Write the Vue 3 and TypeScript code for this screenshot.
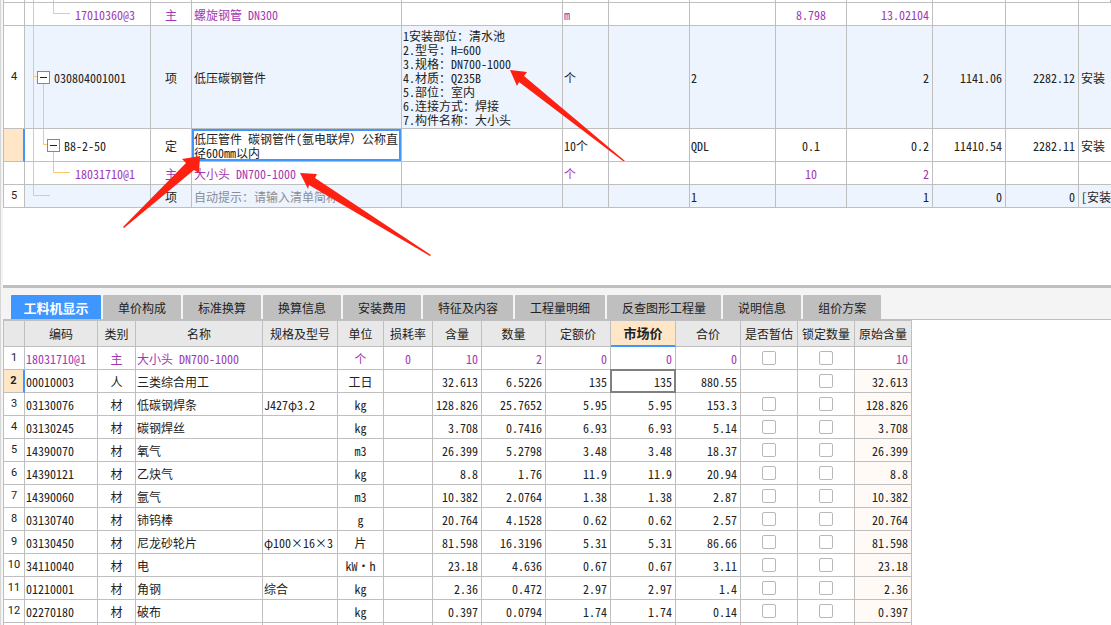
<script setup lang="ts">
import { ref } from 'vue'

type Kind = 'item' | 'quota' | 'material' | 'hint'

interface BillRow {
  no: string
  kind: Kind
  level: number
  code: string
  type: string
  name: string
  features: string
  unit: string
  expression: string
  content: string
  quantity: string
  price: string
  total: string
  major: string
  height: string
  branches: string[]
}

const bill: BillRow[] = [
  { no: '', kind: 'material', level: 3, code: '17010360@3', type: '主', name: '螺旋钢管 DN300', features: '', unit: 'm', expression: '', content: '8.798', quantity: '13.02104', price: '', total: '', major: '', height: 'h23', branches: ['M8.5 0V300', 'M28.5 0V10.5H45'] },
  { no: '4', kind: 'item', level: 1, code: '030804001001', type: '项', name: '低压碳钢管件', features: '1安装部位：清水池\n2.型号：H=600\n3.规格：DN700-1000\n4.材质：Q235B\n5.部位：室内\n6.连接方式：焊接\n7.构件名称：大小头', unit: '个', expression: '2', content: '', quantity: '2', price: '1141.06', total: '2282.12', major: '安装', height: 'h103', branches: ['M8.5 0V300', 'M8.5 50.5H13', 'M18.5 57V300'] },
  { no: '', kind: 'quota', level: 2, code: 'B8-2-50', type: '定', name: '低压管件 碳钢管件(氩电联焊）公称直径600mm以内', features: '', unit: '10个', expression: 'QDL', content: '0.1', quantity: '0.2', price: '11410.54', total: '2282.11', major: '安装', height: 'h33', branches: ['M8.5 0V300', 'M18.5 0V15.5H23', 'M28.5 22V300'] },
  { no: '', kind: 'material', level: 3, code: '18031710@1', type: '主', name: '大小头 DN700-1000', features: '', unit: '个', expression: '', content: '10', quantity: '2', price: '', total: '', major: '', height: 'h23', branches: ['M8.5 0V300', 'M28.5 0V10.5H45'] },
  { no: '5', kind: 'hint', level: 3, code: '', type: '项', name: '自动提示：请输入清单简称', features: '', unit: '', expression: '1', content: '', quantity: '1', price: '0', total: '0', major: '[安装', height: 'h23', branches: ['M8.5 0V10.5H25'] },
]

function pieces(text: string): string[] {
  return text.split(/([（）])/).filter(Boolean)
}

const tabs = ['工料机显示', '单价构成', '标准换算', '换算信息', '安装费用', '特征及内容', '工程量明细', '反查图形工程量', '说明信息', '组价方案']
const activeTab = ref(0)

const headers = ['', '编码', '类别', '名称', '规格及型号', '单位', '损耗率', '含量', '数量', '定额价', '市场价', '合价', '是否暂估', '锁定数量', '原始含量']

interface Resource {
  code: string
  type: string
  name: string
  spec: string
  unit: string
  loss: string
  content: string
  quantity: string
  quotaPrice: string
  marketPrice: string
  total: string
  provisional: boolean | null
  locked: boolean
  original: string
}

function resource(code: string, type: string, name: string, spec: string, unit: string, loss: string, content: string, quantity: string, price: string, total: string, provisional: boolean | null = false): Resource {
  return { code, type, name, spec, unit, loss, content, quantity, quotaPrice: price, marketPrice: price, total, provisional, locked: false, original: content }
}

const resources = ref<Resource[]>([
  resource('18031710@1', '主', '大小头 DN700-1000', '', '个', '0', '10', '2', '0', '0'),
  resource('00010003', '人', '三类综合用工', '', '工日', '', '32.613', '6.5226', '135', '880.55', null),
  resource('03130076', '材', '低碳钢焊条', 'J427φ3.2', 'kg', '', '128.826', '25.7652', '5.95', '153.3'),
  resource('03130245', '材', '碳钢焊丝', '', 'kg', '', '3.708', '0.7416', '6.93', '5.14'),
  resource('14390070', '材', '氧气', '', 'm3', '', '26.399', '5.2798', '3.48', '18.37'),
  resource('14390121', '材', '乙炔气', '', 'kg', '', '8.8', '1.76', '11.9', '20.94'),
  resource('14390060', '材', '氩气', '', 'm3', '', '10.382', '2.0764', '1.38', '2.87'),
  resource('03130740', '材', '铈钨棒', '', 'g', '', '20.764', '4.1528', '0.62', '2.57'),
  resource('03130450', '材', '尼龙砂轮片', 'φ100×16×3', '片', '', '81.598', '16.3196', '5.31', '86.66'),
  resource('34110040', '材', '电', '', 'kW·h', '', '23.18', '4.636', '0.67', '3.11'),
  resource('01210001', '材', '角钢', '综合', 'kg', '', '2.36', '0.472', '2.97', '1.4'),
  resource('02270180', '材', '破布', '', 'kg', '', '0.397', '0.0794', '1.74', '0.14'),
])
const selected = ref(1)
</script>

<template>
  <main class="workspace">
    <section class="bill-pane">
      <table class="grid bill">
        <colgroup>
          <col v-for="n in 13" :key="n" :class="'b' + n" />
        </colgroup>
        <tbody>
          <tr class="sliver">
            <td></td>
            <td><svg class="branches"><path d="M8.5 0V3M28.5 0V3" /></svg></td>
            <td v-for="n in 11" :key="n"></td>
          </tr>
          <tr v-for="(row, i) in bill" :key="i" :class="[row.kind, row.height]">
            <td class="no" :class="{ current: row.kind === 'quota' }">{{ row.no }}</td>
            <td class="code">
              <svg class="branches"><path v-for="d in row.branches" :key="d" :d="d" /></svg>
              <div class="node" :class="'level' + row.level">
                <button v-if="row.level < 3" class="toggle" type="button" aria-label="折叠"></button>
                <span>{{ row.code }}</span>
              </div>
            </td>
            <td class="center">{{ row.type }}</td>
            <td class="name"><span v-for="(p, k) in pieces(row.name)" :key="k" :class="{ wide: p === '）' }">{{ p }}</span></td>
            <td class="features">{{ row.features }}</td>
            <td>{{ row.unit }}</td>
            <td></td>
            <td>{{ row.expression }}</td>
            <td class="center">{{ row.content }}</td>
            <td class="num">{{ row.quantity }}</td>
            <td class="num">{{ row.price }}</td>
            <td class="num">{{ row.total }}</td>
            <td class="major">{{ row.major }}</td>
          </tr>
        </tbody>
      </table>
    </section>

    <section class="detail-pane">
      <nav class="tabs" role="tablist">
        <button
          v-for="(tab, i) in tabs"
          :key="tab"
          class="tab"
          :class="{ active: i === activeTab }"
          type="button"
          role="tab"
          :aria-selected="i === activeTab"
          @click="activeTab = i"
        >{{ tab }}</button>
      </nav>
      <div class="sheet">
        <table class="grid detail">
          <colgroup>
            <col v-for="n in 15" :key="n" :class="'d' + n" />
          </colgroup>
          <thead>
            <tr>
              <th v-for="h in headers" :key="h" scope="col" :class="{ focus: h === '市场价' }">{{ h }}</th>
            </tr>
          </thead>
          <tbody>
            <tr v-for="(r, i) in resources" :key="r.code" class="h23" :class="{ material: i === 0, selected: i === selected }" @click="selected = i">
              <td class="no" :class="{ current: i === selected }">{{ i + 1 }}</td>
              <td>{{ r.code }}</td>
              <td class="center">{{ r.type }}</td>
              <td>{{ r.name }}</td>
              <td>{{ r.spec }}</td>
              <td class="center">{{ r.unit }}</td>
              <td class="center">{{ r.loss }}</td>
              <td class="num">{{ r.content }}</td>
              <td class="num">{{ r.quantity }}</td>
              <td class="num">{{ r.quotaPrice }}</td>
              <td class="num market">{{ r.marketPrice }}</td>
              <td class="num">{{ r.total }}</td>
              <td class="check"><input v-if="r.provisional !== null" v-model="r.provisional" type="checkbox" :aria-label="r.name + ' 是否暂估'" /></td>
              <td class="check"><input v-model="r.locked" type="checkbox" :aria-label="r.name + ' 锁定数量'" /></td>
              <td class="num original">{{ r.original }}</td>
            </tr>
            <tr class="h23"><td v-for="n in 15" :key="n" :class="{ original: n === 15 }"></td></tr>
          </tbody>
        </table>
      </div>
    </section>

    <svg class="arrows" width="640" height="270" viewBox="0 0 640 270" aria-hidden="true">
      <path d="M510 70L527 72L524 76L625 161L623 161L519 82L517 86Z" />
      <path d="M200 156L199 173L194 170L124 228L123 227L186 163L182 159Z" />
      <path d="M300 173L317 174L315 178L431 255L430 256L309 185L308 189Z" />
    </svg>
  </main>
</template>

<style>
body {
  margin: 0;
  background: #fff;
}
</style>

<style scoped>
.workspace {
  position: relative;
  display: flex;
  flex-direction: column;
  height: 100vh;
  box-sizing: border-box;
  border-left: 1px solid #d6d6d6;
  padding-left: 2px;
  background: #f4f4f4;
  color: #222;
  font-family: "Noto Sans CJK SC", sans-serif;
  font-feature-settings: "hwid";
  font-size: 12px;
  line-height: 14px;
  overflow: hidden;
}
.bill-pane {
  flex: none;
  height: 45.6vh;
  overflow: hidden;
  background: #fff;
}
.grid {
  table-layout: fixed;
  border-collapse: separate;
  border-spacing: 0;
  border-left: 1px solid #bfbfbf;
}
.grid td,
.grid th {
  box-sizing: border-box;
  border: 0 solid #bfbfbf;
  border-width: 0 1px 1px 0;
  padding: 2px 1px 0;
  background: #fff;
  font-weight: 400;
  text-align: left;
  vertical-align: middle;
  overflow: hidden;
  white-space: nowrap;
}
.bill { width: 100%; }
.sliver { height: 3px; }
.h23 { height: 23px; }
.h33 { height: 33px; }
.h103 { height: 103px; }
.b1 { width: 21px; }
.b2 { width: 126px; }
.b3 { width: 41px; }
.b4 { width: 210px; }
.b5 { width: 161px; }
.b6 { width: 46px; }
.b7 { width: 81px; }
.b8 { width: 86px; }
.b9 { width: 71px; }
.b10 { width: 86px; }
.b11, .b12 { width: 73px; }
.grid.bill .item td:not(.no),
.grid.bill .hint td:not(.no) { background: #edf4fe; }
.grid .material td { color: #a237b4; }
.grid .material td.no { color: #222; }
.grid .hint .name { color: #8a8e94; }
.grid td.center { text-align: center; }
.grid td.num { text-align: right; padding-right: 3px; }
.grid td.major { border-right: 0; padding-left: 2px; }
.grid td.features { white-space: pre; }
.grid td.no {
  padding: 0;
  text-align: center;
  font-size: 11px;
  font-family: Roboto, sans-serif;
}
.grid td.current {
  background: #ffe6c7;
  border-right: 2px solid #4096ff;
  font-weight: 700;
}
.grid .code { position: relative; padding: 0; }
.branches {
  position: absolute;
  left: 0;
  top: 0;
  width: 100%;
  height: 100%;
  fill: none;
  stroke: #ffc46e;
}
.grid .sliver td { position: relative; padding: 0; }
.node {
  position: relative;
  display: flex;
  align-items: center;
  gap: 4px;
}
.node span { padding-top: 2px; }
.level1 { padding-left: 12px; }
.level2 { padding-left: 22px; }
.level3 { padding-left: 50px; }
.toggle {
  display: flex;
  align-items: center;
  justify-content: center;
  box-sizing: border-box;
  width: 13px;
  height: 13px;
  padding: 0;
  border: 1px solid #888;
  border-radius: 0;
  background: #fff;
}
.toggle::before {
  content: "";
  width: 7px;
  height: 1px;
  background: #222;
}
.grid .name { padding-left: 2px; }
.wide { font-feature-settings: normal; }
.grid .quota .name {
  white-space: normal;
  word-break: break-all;
  padding-right: 0;
  box-shadow: inset 0 0 0 2px #4096ff;
}
.detail-pane {
  display: flex;
  flex: 1;
  flex-direction: column;
  min-height: 0;
  border-top: 3px solid #bfbfbf;
}
.tabs {
  display: flex;
  gap: 2px;
  padding: 7px 0 0 8px;
  border-bottom: 1px solid #bfbfbf;
}
.tab {
  height: 24px;
  padding: 2px 15px 0;
  border: 0;
  border-radius: 1px 1px 0 0;
  background: #bfbfbf;
  color: #222;
  font: inherit;
  white-space: nowrap;
}
.tab.active {
  min-width: 90px;
  padding: 2px 12px 0;
  background: #4096ff;
  color: #fff;
  font-size: 13px;
  font-weight: 700;
}
.sheet {
  flex: 1;
  min-height: 0;
  overflow: hidden;
  background: #fff;
}
.detail { width: 909px; border-top: 1px solid #bfbfbf; }
.detail th {
  height: 26px;
  padding: 0;
  background: #e8e8e8;
  text-align: center;
}
.detail th.focus {
  border-bottom: 2px solid #4096ff;
  background: #ffe6c7;
  font-size: 13px;
  font-weight: 700;
}
.d1 { width: 21px; }
.d2 { width: 73px; }
.d3 { width: 38px; }
.d4 { width: 127px; }
.d5 { width: 75px; }
.d6 { width: 46px; }
.d7, .d8 { width: 49px; }
.d9 { width: 64px; }
.d10, .d11, .d12 { width: 65px; }
.d13, .d14, .d15 { width: 57px; }
.grid .selected .market { position: relative; overflow: visible; }
.selected .market::after {
  content: "";
  position: absolute;
  inset: -1px;
  border: 2px solid #808080;
}
.grid td.check { padding: 0; text-align: center; line-height: 0; }
.check input {
  appearance: none;
  box-sizing: border-box;
  width: 14px;
  height: 14px;
  margin: 0;
  border: 1px solid #b8b8b8;
  border-radius: 2px;
  background: #fff;
}
.check input:checked { background: #4096ff; }
.detail tr:not(.material) td.original { background: #fffaf5; }
.arrows {
  position: absolute;
  left: -1px;
  top: 0;
  fill: #fe2010;
  pointer-events: none;
}
</style>
